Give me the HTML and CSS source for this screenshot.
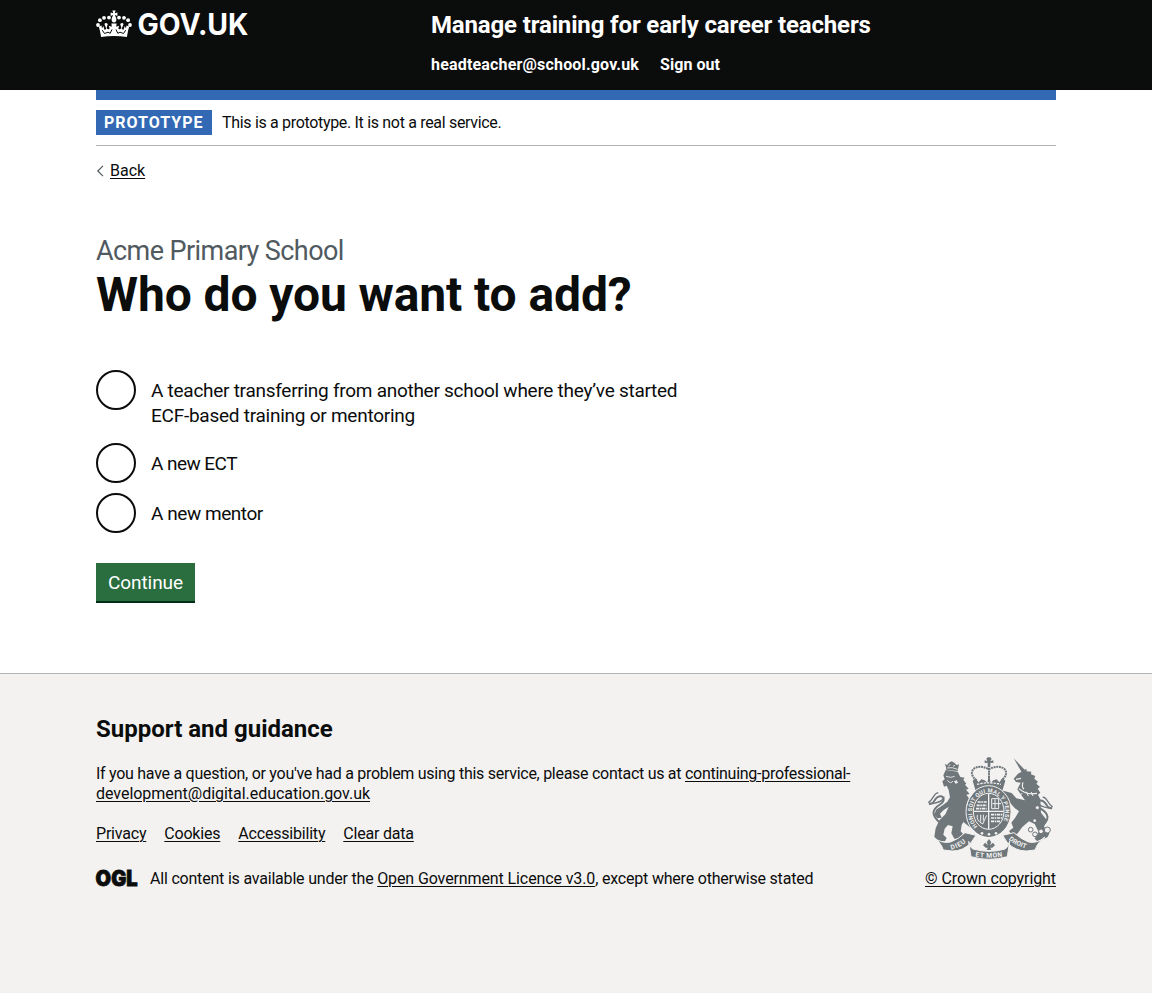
FILE: index.html
```html
<!DOCTYPE html>
<html lang="en">
<head>
<meta charset="utf-8">
<title>Who do you want to add? - Manage training for early career teachers</title>
<link rel="stylesheet" href="styles.css">
</head>
<body>
<header class="header">
  <div class="container header-row">
    <a class="logo" href="#">
      <svg class="logo-mark" width="156" height="33" viewBox="0 0 156 33" aria-label="GOV.UK">
        <g fill="#fff" transform="translate(0 -.8)">
          <circle cx="2" cy="17.8" r="1.9"/><circle cx="3.9" cy="13" r="1.9"/><circle cx="8" cy="10.600" r="1.9"/><circle cx="13" cy="10.400" r="1.9"/>
          <circle cx="34" cy="17.8" r="1.9"/><circle cx="32.100" cy="13" r="1.9"/><circle cx="28" cy="10.600" r="1.9"/><circle cx="23" cy="10.400" r="1.9"/>
          <path d="M16.400 3.400h3.200l-.9 2.600 2.700-.8v3.600l-2.500-1c.7 1.700 1.500 3.300 1.500 4.700 0 1.600-1 2.800-2.400 2.800s-2.400-1.200-2.400-2.800c0-1.400.8-3 1.500-4.700l-2.500 1V5.200l2.700.8z"/>
          <path d="M2.800 19.200 5.600 18.300 6 21.200 7.300 18.700 8.600 22.800 10.300 21.600 8.400 16.800Q9.800 14.600 11.800 16.800L10.600 20.700Q12.300 23.200 13.600 21.200L12.900 18.500 15.800 19.600 15.400 16.400H20.600L20.200 19.600 23.100 18.500 22.400 21.200Q23.700 23.200 25.400 20.700L24.200 16.800Q26.200 14.600 27.600 16.800L25.700 21.600 27.400 22.800 28.700 18.700 30 21.200 30.400 18.300 33.200 19.200Q31.800 23.500 30.900 29.800Q18 27.600 5.100 29.800Q4.200 23.500 2.800 19.200z"/>
        </g>
        <path d="M6.300 22.200 8.500 25.500 12 24.200 14.200 25.300 16 21.400M29.700 22.200 27.500 25.500 24 24.200 21.800 25.300 20 21.400" fill="none" stroke="#0b0c0c" stroke-width="1"/>
        <text class="logo-text" x="41.500" y="26.500" textLength="111" lengthAdjust="spacingAndGlyphs">GOV.UK</text>
      </svg>
    </a>
    <div class="header-content">
      <a class="service-name" href="#">Manage training for early career teachers</a>
      <nav class="header-nav"><a class="nav-email" href="#">headteacher@school.gov.uk</a><a class="nav-out" href="#">Sign out</a></nav>
    </div>
  </div>
</header>
<div class="container">
  <div class="blue-bar"></div>
  <div class="phase"><strong class="tag">Prototype</strong><span class="phase-text">This is a prototype. It is not a real service.</span></div>
  <a class="back" href="#"><svg width="8" height="12" viewBox="0 0 8 12"><path d="M7 .8 1.800 6 7 11.200" fill="none" stroke="#505a5f" stroke-width="1.200"/></svg><span class="link">Back</span></a>
  <main class="main">
    <span class="caption">Acme Primary School</span>
    <h1 class="title">Who do you want to add?</h1>
    <form class="form">
      <div class="radios">
        <label class="radio radio-tall"><span class="ring"></span><span class="radio-label"><span class="line-a">A teacher transferring from another school where they’ve started</span><br>ECF-based training or mentoring</span></label>
        <label class="radio"><span class="ring"></span><span class="radio-label short-a">A new ECT</span></label>
        <label class="radio"><span class="ring"></span><span class="radio-label short-b">A new mentor</span></label>
      </div>
      <button class="button" type="button">Continue</button>
    </form>
  </main>
</div>
<footer class="footer">
  <div class="container footer-row">
    <div class="footer-main">
      <h2 class="footer-title">Support and guidance</h2>
      <p class="contact">If you have a question, or you've had a problem using this service, please contact us at <a class="link" href="#">continuing-professional-<br><span class="mail-end">development@digital.education.gov.uk</span></a></p>
      <ul class="links">
        <li><a class="link" href="#">Privacy</a></li><li><a class="link" href="#">Cookies</a></li><li><a class="link" href="#">Accessibility</a></li><li><a class="link" href="#">Clear data</a></li>
      </ul>
      <div class="licence">
        <svg class="ogl-mark" width="42" height="20" viewBox="0 0 42 20" aria-label="OGL"><text class="ogl" x="-.4" y="16.700" textLength="42" lengthAdjust="spacingAndGlyphs">OGL</text></svg>
        <span>All content is available under the <a class="link licence-link" href="#">Open Government Licence v3.0</a>, except where otherwise stated</span>
      </div>
    </div>
    <div class="crown-copy">
      <svg class="crest" width="125" height="102" viewBox="24 21 375 306">
        <defs>
          <path id="motto" d="M173 229A50 58 0 1 1 239 229"/>
          <path id="dieu" d="M94 299Q120 294 144 271"/>
          <path id="etmon" d="M162 319Q207 327 252 319"/>
          <path id="droit" d="M264 268Q292 291 326 298"/>
          <g id="tail" fill="none" stroke="#6f777b"><path d="M64 222C30 194 36 178 62 162C79 149 68 132 53 141C39 150 44 164 27 160" stroke-width="6"/><path d="M55 129C42 126 43 146 25 158M72 140C70 158 42 160 27 163" stroke-width="4"/></g>
        </defs>
        <use href="#tail"/>
        <use href="#tail" transform="matrix(-1 0 0 1 423 13)"/>
        <g fill="#6f777b">
          <path d="M78 51 74 42 81 45 87 38 95 34 103 38 110 45 117 43 113 63 79 60z"/>
          <path d="M77 60 113 65 121 81 134 83 130 89 139 101 135 104 146 116 138 119 149 132 139 134 148 146Q137 162 144 182L151 208 168 219 176 232 168 240 149 231 130 216 125 225 122 244 134 257 128 267 103 266 94 250 98 229 84 225 74 236 70 254 80 264 75 274 52 272 43 260 47 235 58 211 76 193 86 171 71 180 60 191 65 203 52 205 43 194 48 179 68 166 82 155 90 142 86 120 80 107 72 110 67 94 74 88 70 76z"/>
          <path d="M281 25 317 62 306 68z"/>
          <path d="M305 65 319 56 320 64 334 65 333 73 346 78 343 86 354 95 349 101 360 111 353 116 361 128 354 134 361 148 363 188 380 210 372 230 388 251 382 262 352 274 344 266 356 246 344 222 327 214 307 231 292 251 276 255 267 243 280 233 274 218 285 204 297 184 284 174 271 160 264 168 250 156 238 133 250 122 275 129 289 145 315 151 302 133 292 118 302 98 288 96 281 86 294 71z"/>
          <path d="M199 26 203 22 211 22 215 26 211 34 220 31 220 39 211 38 211 52H203V38L194 39V31L202 34z"/>
          <path d="M158 92 166 85 176 97 184 88 194 91 202 99 207 72 212 99 220 91 230 88 238 97 248 85 256 92 246 126H168z"/>
          <ellipse cx="206" cy="185" rx="66" ry="76"/>
        </g>
        <path d="M170 91C136 66 168 36 207 58C246 36 278 66 244 91M207 54V96" fill="none" stroke="#6f777b" stroke-width="6" stroke-dasharray="6 2"/>
        <g fill="none" stroke="#f3f2f1">
          <ellipse cx="206" cy="185" rx="68" ry="78" stroke-width="3"/>
          <ellipse cx="206" cy="184" rx="46" ry="54" stroke-width="3"/>
          <path d="M206 131V237M161 184H251" stroke-width="4"/>
          <path d="M173 156H200M170 166H200M168 176H200M213 194H248M213 204H246M213 214H240" stroke-width="5" stroke-dasharray="9 2 5 2"/>
          <path d="M215 146H236V176H215zM225 148V174M217 161H243M172 195Q168 212 188 222L200 196M182 194V215M190 194V212" stroke-width="3"/>
          <path d="M171 103Q207 94 243 103" stroke-width="4" stroke-dasharray="7 3"/>
          <path d="M81 54Q96 50 113 58M86 49 90 43M99 49 105 46M78 79 92 82 104 79M82 91Q93 103 99 93" stroke-width="2.5"/>
          <path d="M288 88 303 85M309 97Q304 112 312 118M297 116Q318 136 351 130" stroke-width="3.5"/>
          <path d="M280 121Q289 126 284 132Q298 138 307 131M319 125 325 138M334 126 339 138" stroke-width="3"/>
        </g>
        <g fill="#f3f2f1"><circle cx="186" cy="250" r="4"/><circle cx="207" cy="253" r="4"/><circle cx="228" cy="250" r="4"/><path d="M102 94 110 91 114 98 107 101z"/><circle cx="344" cy="212" r="4"/></g>
        <g fill="#f3f2f1" stroke="#6f777b" stroke-width="3"><circle cx="332" cy="239" r="7"/><circle cx="345" cy="253" r="7"/><circle cx="363" cy="244" r="7"/><circle cx="382" cy="240" r="9"/><circle cx="352" cy="173" r="6"/></g>
        <g fill="#6f777b" stroke="#f3f2f1" stroke-width="3">
          <path d="M40 261Q64 282 92 276Q118 266 135 248L168 256 153 278Q130 303 97 303L70 300Q62 276 40 261z"/>
          <path d="M375 261Q351 282 325 276Q301 266 282 248L248 256 262 278Q286 303 319 303L345 300Q353 276 375 261z"/>
          <path d="M146 274Q150 296 162 298Q207 310 253 298Q264 295 269 274L262 320Q207 336 153 320z"/>
        </g>
        <path d="M207 267 214 277 210 286 219 278 225 286 217 293H211L214 300H200L203 293H197L189 286 195 278 204 286 200 277z" fill="#6f777b"/>
        <g class="crest-text">
          <text font-size="17"><textPath href="#motto" textLength="244">HONI SOIT QUI MAL Y PENSE</textPath></text>
          <text font-size="20"><textPath href="#dieu" textLength="50">DIEU</textPath></text>
          <text font-size="20"><textPath href="#etmon" startOffset="4" textLength="82">ET MON</textPath></text>
          <text font-size="20"><textPath href="#droit" startOffset="2" textLength="58">DROIT</textPath></text>
        </g>
      </svg>
      <a class="link" href="#">© Crown copyright</a>
    </div>
  </div>
</footer>
</body>
</html>
```
FILE: styles.css
```css
* { box-sizing: border-box; }
body { margin: 0; background: #fff; color: #0b0c0c; font: 16px/20px Roboto, "Liberation Sans", sans-serif; letter-spacing: -0.2px; }
a { color: inherit; text-decoration: none; }
.link { text-decoration: underline; text-decoration-thickness: 1px; text-underline-offset: 2px; }
.container { width: 960px; margin: 0 auto; }
.header { height: 90px; background: #0b0c0c; color: #fff; }
.header-row { display: flex; }
.logo { width: 335px; padding-top: 8px; }
.logo-mark { display: block; overflow: visible; }
.logo-text { fill: #fff; font: 700 29.5px Inter, sans-serif; letter-spacing: 0; }
.header-content { padding-top: 10px; font-weight: 700; }
.service-name { display: block; font-size: 24px; line-height: 30px; letter-spacing: -0.15px; }
.header-nav { display: flex; gap: 21px; margin-top: 15px; letter-spacing: .05px; }
.nav-email { letter-spacing: .18px; }
.blue-bar { height: 10px; background: #3369b4; }
.phase { height: 46px; padding: 10px 0; border-bottom: 1px solid #b1b4b6; display: flex; gap: 10px; line-height: 25px; }
.tag { background: #3369b4; color: #fff; padding: 0 8px; width: 116px; text-transform: uppercase; letter-spacing: 1px; white-space: nowrap; }
.phase-text { letter-spacing: -.32px; }
.back { display: flex; align-items: center; gap: 6px; margin-top: 15px; width: max-content; letter-spacing: 0; }
.main { padding: 55px 0 70px; }
.caption { display: block; font-size: 27px; line-height: 30px; color: #505a5f; letter-spacing: -.58px; }
.title { margin: 4px 0 50px; font-size: 48px; line-height: 50px; letter-spacing: -.1px; }
.radios { display: flex; flex-direction: column; gap: 10px; margin-bottom: 30px; }
.radio { display: flex; gap: 15px; min-height: 40px; font-size: 19px; line-height: 25px; letter-spacing: -.25px; }
.radio-tall { min-height: 63px; }
.ring { width: 40px; height: 40px; border: 2px solid #0b0c0c; border-radius: 50%; flex: none; }
.radio-label { padding-top: 8px; }
.line-a { letter-spacing: -.27px; }
.short-a { letter-spacing: -.55px; }
.short-b { letter-spacing: -.45px; }
.button { display: block; width: 99px; height: 40px; padding: 1px 0 0; border: 0; border-bottom: 2px solid #002d18; background: #2a6d3f; color: #fff; font: 19px/37px Roboto, sans-serif; letter-spacing: -.07px; }
.footer { border-top: 1px solid #b1b4b6; height: 320px; background: #f3f2f1; }
.footer-row { display: flex; justify-content: space-between; padding-top: 40px; }
.footer-title { margin: 0 0 20px; font-size: 24px; line-height: 30px; letter-spacing: 0; }
.contact { margin: 0 0 20px; white-space: nowrap; letter-spacing: -.275px; }
.mail-end { letter-spacing: -.03px; }
.links { display: flex; gap: 18px; list-style: none; margin: 0 0 25px; padding: 0; }
.licence { display: flex; gap: 12px; }
.licence-link { letter-spacing: -.11px; }
.ogl-mark { overflow: visible; }
.ogl { font: 900 21px Inter, sans-serif; fill: #0b0c0c; stroke: #0b0c0c; stroke-width: .8px; letter-spacing: 0; }
.crown-copy { width: 131px; padding-top: 43px; display: flex; flex-direction: column; align-items: flex-end; letter-spacing: -.09px; white-space: nowrap; }
.crest { display: block; margin: 0 3px 10px 0; overflow: visible; }
.crest-text { font-family: Roboto, sans-serif; font-weight: 700; fill: #f3f2f1; letter-spacing: 0; }
```
